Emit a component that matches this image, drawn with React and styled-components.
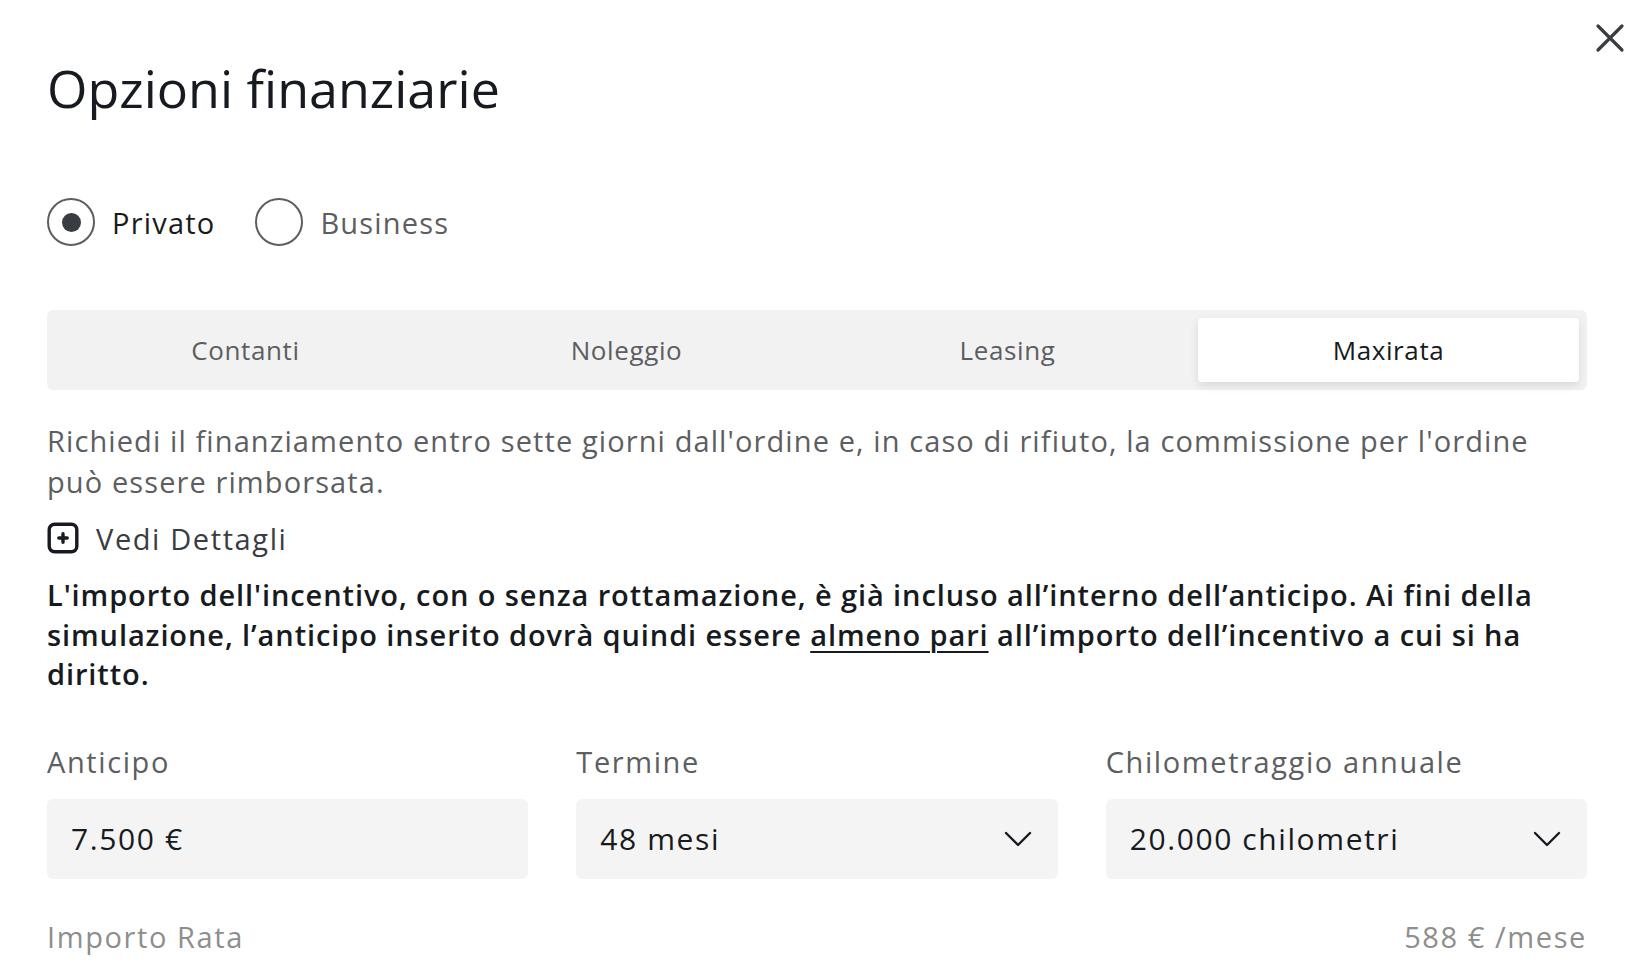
import React, { useState } from 'react';
import styled, { createGlobalStyle } from 'styled-components';

const GlobalStyle = createGlobalStyle`
  html, body {
    margin: 0;
    padding: 0;
    background: #ffffff;
  }
  body {
    font-family: "Open Sans", "Liberation Sans", sans-serif;
    color: #171a20;
    -webkit-font-smoothing: antialiased;
  }
`;

const Modal = styled.div`
  position: relative;
  width: 1648px;
  min-height: 976px;
  box-sizing: border-box;
  padding: 54px 61px 0 47px;
  overflow: hidden;
`;

const CloseButton = styled.button`
  position: absolute;
  top: 22px;
  right: 22px;
  width: 32px;
  height: 32px;
  padding: 0;
  border: none;
  background: transparent;
  color: #393c41;
  cursor: pointer;
  display: flex;
  align-items: center;
  justify-content: center;
`;

const Title = styled.h1`
  margin: 0;
  font-size: 52px;
  line-height: 68px;
  font-weight: 500;
  color: #171a20;
`;

const RadioGroup = styled.div`
  display: flex;
  align-items: center;
  gap: 40px;
  margin-top: 76px;
`;

const RadioLabel = styled.label`
  display: flex;
  align-items: center;
  gap: 17px;
  font-size: 29px;
  letter-spacing: 1.2px;
  font-weight: 500;
  color: ${p => (p.checked ? '#171a20' : '#5c5e62')};
  cursor: pointer;
`;

const RadioCircle = styled.span`
  width: 44px;
  height: 44px;
  border-radius: 50%;
  border: 2px solid #5c5e62;
  display: flex;
  align-items: center;
  justify-content: center;
  &::after {
    content: '';
    width: 19px;
    height: 19px;
    border-radius: 50%;
    background: #393c41;
    display: ${p => (p.checked ? 'block' : 'none')};
  }
`;

const TabBar = styled.div`
  display: grid;
  grid-template-columns: repeat(4, 1fr);
  margin-top: 64px;
  padding: 8px;
  height: 80px;
  box-sizing: border-box;
  background: #f2f2f2;
  border-radius: 6px;
`;

const Tab = styled.button`
  border: none;
  border-radius: 4px;
  font-family: inherit;
  font-size: 26px;
  letter-spacing: 0.6px;
  font-weight: 500;
  color: ${p => (p.active ? '#171a20' : '#5c5e62')};
  background: ${p => (p.active ? '#ffffff' : 'transparent')};
  box-shadow: ${p => (p.active ? '0 4px 10px rgba(0, 0, 0, 0.1)' : 'none')};
  cursor: pointer;
`;

const Description = styled.p`
  margin: 30px 0 0;
  font-size: 29px;
  line-height: 41px;
  letter-spacing: 1.1px;
  color: #5c5e62;
`;

const DetailsToggle = styled.button`
  display: flex;
  align-items: center;
  gap: 17px;
  height: 40px;
  margin-top: 16px;
  padding: 0;
  border: none;
  background: transparent;
  font-family: inherit;
  font-size: 29px;
  letter-spacing: 1.6px;
  font-weight: 500;
  color: #393c41;
  cursor: pointer;
`;

const Notice = styled.p`
  margin: 17px 0 0;
  font-size: 29px;
  line-height: 39.5px;
  letter-spacing: 0.9px;
  font-weight: 600;
  color: #171a20;
`;

const Underlined = styled.span`
  text-decoration: underline;
  text-underline-offset: 5px;
  text-decoration-thickness: 2px;
`;

const FieldGrid = styled.div`
  display: grid;
  grid-template-columns: repeat(3, 1fr);
  column-gap: 48px;
  margin-top: 48px;
`;

const Field = styled.div`
  display: flex;
  flex-direction: column;
  gap: 17px;
`;

const FieldLabel = styled.span`
  font-size: 29px;
  line-height: 40px;
  letter-spacing: 1.6px;
  font-weight: 500;
  color: #5c5e62;
`;

const FieldBox = styled.div`
  height: 80px;
  box-sizing: border-box;
  padding: 0 26px 0 24px;
  display: flex;
  align-items: center;
  justify-content: space-between;
  background: #f4f4f4;
  border-radius: 6px;
  font-size: 30px;
  letter-spacing: 1.6px;
  font-weight: 500;
  color: #171a20;
`;

const SummaryRow = styled.div`
  display: flex;
  justify-content: space-between;
  align-items: center;
  line-height: 40px;
  margin-top: 38px;
  font-size: 29px;
  letter-spacing: 1.6px;
  font-weight: 500;
  color: #8e8e8e;
`;

const CloseIcon = () => (
  <svg width="30" height="30" viewBox="0 0 30 30" fill="none">
    <path d="M3 3L27 27M27 3L3 27" stroke="currentColor" strokeWidth="3.2" strokeLinecap="round" />
  </svg>
);

const PlusBoxIcon = () => (
  <svg width="32" height="32" viewBox="0 0 32 32" fill="none">
    <rect x="2.2" y="2.2" width="27.6" height="27.6" rx="5.5" stroke="#171a20" strokeWidth="3.4" />
    <path d="M16 11.8V20.2M11.8 16H20.2" stroke="#171a20" strokeWidth="3.4" strokeLinecap="round" />
  </svg>
);

const Chevron = () => (
  <svg width="28" height="16" viewBox="0 0 28 16" fill="none">
    <path d="M2 2L14 14L26 2" stroke="#171a20" strokeWidth="2.4" strokeLinecap="round" strokeLinejoin="round" />
  </svg>
);

const tabs = ['Contanti', 'Noleggio', 'Leasing', 'Maxirata'];

const fields = [
  { label: 'Anticipo', value: '7.500 €', select: false },
  { label: 'Termine', value: '48 mesi', select: true },
  { label: 'Chilometraggio annuale', value: '20.000 chilometri', select: true },
];

export default function App() {
  const [customer, setCustomer] = useState('privato');
  const [tab, setTab] = useState('Maxirata');

  return (
    <>
      <GlobalStyle />
      <Modal>
        <CloseButton aria-label="Chiudi">
          <CloseIcon />
        </CloseButton>
        <Title>Opzioni finanziarie</Title>

        <RadioGroup>
          <RadioLabel checked={customer === 'privato'} onClick={() => setCustomer('privato')}>
            <RadioCircle checked={customer === 'privato'} />
            Privato
          </RadioLabel>
          <RadioLabel checked={customer === 'business'} onClick={() => setCustomer('business')}>
            <RadioCircle checked={customer === 'business'} />
            Business
          </RadioLabel>
        </RadioGroup>

        <TabBar>
          {tabs.map(t => (
            <Tab key={t} active={t === tab} onClick={() => setTab(t)}>
              {t}
            </Tab>
          ))}
        </TabBar>

        <Description>
          Richiedi il finanziamento entro sette giorni dall'ordine e, in caso di rifiuto, la commissione per l'ordine
          può essere rimborsata.
        </Description>

        <DetailsToggle>
          <PlusBoxIcon />
          Vedi Dettagli
        </DetailsToggle>

        <Notice>
          L'importo dell'incentivo, con o senza rottamazione, è già incluso all’interno dell’anticipo. Ai fini della
          simulazione, l’anticipo inserito dovrà quindi essere <Underlined>almeno pari</Underlined> all’importo
          dell’incentivo a cui si ha diritto.
        </Notice>

        <FieldGrid>
          {fields.map(f => (
            <Field key={f.label}>
              <FieldLabel>{f.label}</FieldLabel>
              <FieldBox>
                {f.value}
                {f.select && <Chevron />}
              </FieldBox>
            </Field>
          ))}
        </FieldGrid>

        <SummaryRow>
          <span>Importo Rata</span>
          <span>588 € /mese</span>
        </SummaryRow>
      </Modal>
    </>
  );
}
